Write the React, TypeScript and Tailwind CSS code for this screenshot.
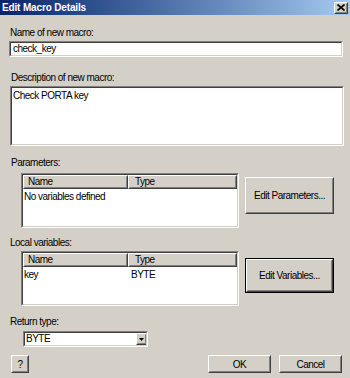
import React from "react";

function Sunken({ className = "", children }: { className?: string; children?: React.ReactNode }) {
  return (
    <div className={"border border-t-[#808080] border-l-[#808080] border-b-white border-r-white " + className}>
      <div className="h-full w-full border border-t-[#404040] border-l-[#404040] border-b-[#d4d0c8] border-r-[#d4d0c8] bg-white overflow-hidden">
        {children}
      </div>
    </div>
  );
}

function Raised({ className = "", children }: { className?: string; children?: React.ReactNode }) {
  return (
    <div className={"border border-t-white border-l-white border-b-[#404040] border-r-[#404040] " + className}>
      <div className="h-full w-full border border-t-[#d4d0c8] border-l-[#d4d0c8] border-b-[#808080] border-r-[#808080] bg-[#d4d0c8] flex items-center justify-center">
        {children}
      </div>
    </div>
  );
}

function ListView({ rows }: { rows: [string, string][] | string }) {
  return (
    <Sunken className="w-[218px] h-[55px]">
      <div className="flex h-[14px]">
        <Raised className="w-[105px] h-[14px]">
          <span className="w-full pl-[3px] text-left leading-[12px]">Name</span>
        </Raised>
        <Raised className="flex-1 h-[14px]">
          <span className="w-full pl-[5px] text-left leading-[12px]">Type</span>
        </Raised>
      </div>
      {typeof rows === "string" ? (
        <div className="pl-[1px] pt-[1px]">{rows}</div>
      ) : (
        rows.map(([n, t]) => (
          <div key={n} className="flex pt-[1px]">
            <div className="w-[105px] pl-[1px]">{n}</div>
            <div className="pl-[3px]">{t}</div>
          </div>
        ))
      )}
    </Sunken>
  );
}

export default function App() {
  return (
    <div className="w-[350px] h-[378px] bg-[#d4d0c8] overflow-hidden font-['Liberation_Sans',Arial,sans-serif] text-[10px] tracking-[-0.5px] leading-[13px] text-black">
      <div className="h-[15px] flex items-center justify-between bg-linear-to-r from-[#0a246a] to-[#a6caf0] pl-[2px] pr-[2px]">
        <span className="text-white font-bold tracking-[-0.15px]">Edit Macro Details</span>
        <Raised className="w-[14px] h-[12px]">
          <svg width="8" height="7" viewBox="0 0 8 7">
            <path d="M0.5 0.5 L7.5 6.5 M7.5 0.5 L0.5 6.5" stroke="#000" strokeWidth="1.6" />
          </svg>
        </Raised>
      </div>
      <div className="pl-[9px] pr-[7px] flex flex-col">
        <div className="mt-[11px] h-[13px] pl-[1px]">Name of new macro:</div>
        <Sunken className="mt-[2px] h-[16px] w-[334px]">
          <div className="pl-[2px] leading-[12px]">check_key</div>
        </Sunken>

        <div className="mt-[14px] h-[13px] pl-[2px]">Description of new macro:</div>
        <Sunken className="mt-[2px] h-[60px] w-[334px] ml-[1px]">
          <div className="pl-[1px] pt-[1px]">Check PORTA key</div>
        </Sunken>

        <div className="mt-[10px] h-[13px] pl-[2px]">Parameters:</div>
        <div className="mt-[4px] flex items-start pl-[12px]">
          <ListView rows="No variables defined" />
          <Raised className="ml-[6px] mt-[4px] w-[89px] h-[37px]">
            <span>Edit Parameters...</span>
          </Raised>
        </div>

        <div className="mt-[8px] h-[13px] pl-[1px]">Local variables:</div>
        <div className="mt-[2px] flex items-start pl-[12px]">
          <ListView rows={[["key", "BYTE"]]} />
          <div className="ml-[6px] mt-[7px] border border-black">
            <Raised className="w-[87px] h-[33px]">
              <span>Edit Variables...</span>
            </Raised>
          </div>
        </div>

        <div className="mt-[9px] h-[13px] pl-[1px]">Return type:</div>
        <div className="mt-[3px] pl-[14px]">
          <Sunken className="w-[125px] h-[16px]">
            <div className="flex h-full">
              <div className="flex-1 pl-[1px] leading-[12px]">BYTE</div>
              <Raised className="w-[11px] h-[12px] mr-[-1px]">
                <svg width="5" height="3" viewBox="0 0 5 3">
                  <path d="M0 0 H5 L2.5 3 Z" fill="#000" />
                </svg>
              </Raised>
            </div>
          </Sunken>
        </div>

        <div className="mt-[8px] flex items-start">
          <Raised className="ml-[2px] w-[18px] h-[18px]">
            <span>?</span>
          </Raised>
          <Raised className="ml-[179px] w-[63px] h-[18px]">
            <span>OK</span>
          </Raised>
          <Raised className="ml-[8px] w-[63px] h-[18px]">
            <span>Cancel</span>
          </Raised>
        </div>
      </div>
    </div>
  );
}
